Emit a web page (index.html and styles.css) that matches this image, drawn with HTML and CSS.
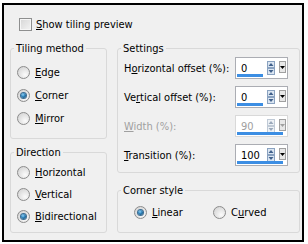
FILE: index.html
```html
<!DOCTYPE html>
<html lang="en">
<head>
    <meta charset="UTF-8">
    <title>Tiling</title>
    <link rel="stylesheet" href="styles.css">
</head>
<body>
    <div class="dialog">
        <!-- Preview toggle -->
        <div class="check-row">
            <span class="checkbox"></span>
            <span><u>S</u>how tiling preview</span>
        </div>

        <div class="columns">
            <div class="col">
                <fieldset class="group tiling">
                    <legend>Tiling method</legend>
                    <div class="radio-row"><span class="radio"></span><span><u>E</u>dge</span></div>
                    <div class="radio-row"><span class="radio checked"></span><span><u>C</u>orner</span></div>
                    <div class="radio-row"><span class="radio"></span><span><u>M</u>irror</span></div>
                </fieldset>

                <fieldset class="group direction">
                    <legend>Direction</legend>
                    <div class="radio-row"><span class="radio"></span><span><u>H</u>orizontal</span></div>
                    <div class="radio-row"><span class="radio"></span><span><u>V</u>ertical</span></div>
                    <div class="radio-row"><span class="radio checked"></span><span><u>B</u>idirectional</span></div>
                </fieldset>
            </div>

            <div class="col">
                <fieldset class="group settings">
                    <legend>Settings</legend>
                    <div class="setting-row">
                        <span class="setting-label">H<u>o</u>rizontal offset (%):</span>
                        <div class="spin">
                            <div class="spin-field"><span class="spin-value">0</span><span class="spin-bar" style="width:26px"></span></div>
                            <svg class="spin-arrows" width="8" height="14" viewBox="0 0 8 14"><rect x="0.5" y="0.5" width="7" height="6" fill="#dbe6f2" stroke="#8aa2c0"/><rect x="0.5" y="7.5" width="7" height="6" fill="#dbe6f2" stroke="#8aa2c0"/><path d="M4 2 L6.5 5 L1.5 5 Z" fill="#3f5f8a"/><path d="M4 12 L6.5 9 L1.5 9 Z" fill="#3f5f8a"/></svg>
                            <span class="spin-drop"><svg width="5" height="3" viewBox="0 0 5 3"><path d="M0 0 H5 L2.5 3 Z" fill="#000"/></svg></span>
                        </div>
                    </div>
                    <div class="setting-row">
                        <span class="setting-label">Ve<u>r</u>tical offset (%):</span>
                        <div class="spin">
                            <div class="spin-field"><span class="spin-value">0</span><span class="spin-bar" style="width:26px"></span></div>
                            <svg class="spin-arrows" width="8" height="14" viewBox="0 0 8 14"><rect x="0.5" y="0.5" width="7" height="6" fill="#dbe6f2" stroke="#8aa2c0"/><rect x="0.5" y="7.5" width="7" height="6" fill="#dbe6f2" stroke="#8aa2c0"/><path d="M4 2 L6.5 5 L1.5 5 Z" fill="#3f5f8a"/><path d="M4 12 L6.5 9 L1.5 9 Z" fill="#3f5f8a"/></svg>
                            <span class="spin-drop"><svg width="5" height="3" viewBox="0 0 5 3"><path d="M0 0 H5 L2.5 3 Z" fill="#000"/></svg></span>
                        </div>
                    </div>
                    <div class="setting-row disabled">
                        <span class="setting-label"><u>W</u>idth (%):</span>
                        <div class="spin">
                            <div class="spin-field"><span class="spin-value">90</span><span class="spin-bar" style="width:46px"></span></div>
                            <svg class="spin-arrows" width="8" height="14" viewBox="0 0 8 14"><rect x="0.5" y="0.5" width="7" height="6" fill="#eef2f6" stroke="#c0cad6"/><rect x="0.5" y="7.5" width="7" height="6" fill="#eef2f6" stroke="#c0cad6"/><path d="M4 2 L6.5 5 L1.5 5 Z" fill="#9aa8ba"/><path d="M4 12 L6.5 9 L1.5 9 Z" fill="#9aa8ba"/></svg>
                            <span class="spin-drop"><svg width="5" height="3" viewBox="0 0 5 3"><path d="M0 0 H5 L2.5 3 Z" fill="#a0a0a0"/></svg></span>
                        </div>
                    </div>
                    <div class="setting-row">
                        <span class="setting-label"><u>T</u>ransition (%):</span>
                        <div class="spin">
                            <div class="spin-field"><span class="spin-value">100</span><span class="spin-bar" style="width:46px"></span></div>
                            <svg class="spin-arrows" width="8" height="14" viewBox="0 0 8 14"><rect x="0.5" y="0.5" width="7" height="6" fill="#dbe6f2" stroke="#8aa2c0"/><rect x="0.5" y="7.5" width="7" height="6" fill="#dbe6f2" stroke="#8aa2c0"/><path d="M4 2 L6.5 5 L1.5 5 Z" fill="#3f5f8a"/><path d="M4 12 L6.5 9 L1.5 9 Z" fill="#3f5f8a"/></svg>
                            <span class="spin-drop"><svg width="5" height="3" viewBox="0 0 5 3"><path d="M0 0 H5 L2.5 3 Z" fill="#000"/></svg></span>
                        </div>
                    </div>
                </fieldset>

                <fieldset class="group corner">
                    <legend>Corner style</legend>
                    <div class="corner-row">
                        <div class="radio-row linear"><span class="radio checked"></span><span><u>L</u>inear</span></div>
                        <div class="radio-row"><span class="radio"></span><span>C<u>u</u>rved</span></div>
                    </div>
                </fieldset>
            </div>
        </div>
    </div>
</body>
</html>
```

FILE: styles.css
```css
* {
    box-sizing: border-box;
}

body {
    margin: 0;
    background: #fff;
    font-family: "DejaVu Sans Condensed", "DejaVu Sans", sans-serif;
    font-size: 11px;
    color: #000;
}

.dialog {
    margin: 3px 4px 2px 2px;
    height: 239px;
    border: 2px solid #000;
    background: #f0f0f0;
    padding: 12px 0 0 6px;
}

.check-row {
    display: flex;
    align-items: center;
    gap: 4px;
    height: 14px;
    padding-left: 9px;
    margin-bottom: 11px;
}

.checkbox {
    width: 13px;
    height: 13px;
    border: 1px solid #8e8f8f;
    background: linear-gradient(135deg, #d6d6d6 0%, #f4f4f4 100%);
    box-shadow: inset 0 0 0 1px #f6f6f6;
}

.columns {
    display: flex;
    gap: 10px;
}

.col {
    display: flex;
    flex-direction: column;
    gap: 7px;
}

.col:first-child {
    width: 97px;
}

.col:last-child {
    width: 183px;
    gap: 11px;
}

.group {
    margin: 0;
    border: 1px solid #d9d9d9;
    border-radius: 3px;
    padding: 0 6px;
}

.group legend {
    padding: 0 2px;
    margin-left: -3px;
    line-height: 13px;
}

.tiling {
    height: 97px;
    padding-top: 6px;
}

.direction {
    height: 87px;
    padding-top: 2px;
}

.radio-row {
    display: flex;
    align-items: center;
    gap: 5px;
    height: 23px;
}

.direction .radio-row {
    height: 22px;
}

.radio {
    width: 13px;
    height: 13px;
    border-radius: 50%;
    border: 1px solid #8c8c8c;
    background: radial-gradient(circle at 65% 70%, #fbfbfb 0%, #e6e6e6 45%, #cfcfcf 100%);
    display: flex;
    align-items: center;
    justify-content: center;
    flex-shrink: 0;
}

.radio.checked::after {
    content: "";
    width: 5px;
    height: 5px;
    border-radius: 50%;
    background: radial-gradient(circle at 40% 35%, #8fd0f5 0%, #2a7fb8 45%, #0b3a5c 100%);
    box-shadow: 0 0 0 1px #3c6d93;
}

.settings {
    height: 131px;
    padding-top: 2px;
}

.setting-row {
    display: flex;
    align-items: center;
    justify-content: space-between;
    height: 22px;
    margin-bottom: 7px;
}

.setting-row.disabled .setting-label,
.setting-row.disabled .spin-value {
    color: #a0a0a0;
}

.spin {
    display: flex;
    align-items: center;
    width: 53px;
    height: 22px;
    background: #fff;
    border: 1px solid #abadb3;
    margin-right: 5px;
}

.disabled .spin {
    border-color: #d9d9d9;
}

.spin-field {
    position: relative;
    width: 30px;
    height: 100%;
    padding: 4px 0 0 5px;
}

.spin-bar {
    position: absolute;
    left: 1px;
    bottom: 1px;
    height: 3px;
    background: #3c8ee3;
}

.spin-arrows {
    margin-left: 1px;
}

.spin-drop {
    margin-left: 4px;
    margin-bottom: 2px;
    width: 7px;
    height: 12px;
    border: 1px solid #a0a0a0;
    background: #e8e8e8;
    display: flex;
    align-items: center;
    justify-content: center;
}

.corner {
    height: 49px;
    padding-top: 2px;
}

.corner-row {
    display: flex;
    padding-left: 10px;
}

.corner .radio-row {
    height: 26px;
}

.corner .linear {
    width: 79px;
}
```
